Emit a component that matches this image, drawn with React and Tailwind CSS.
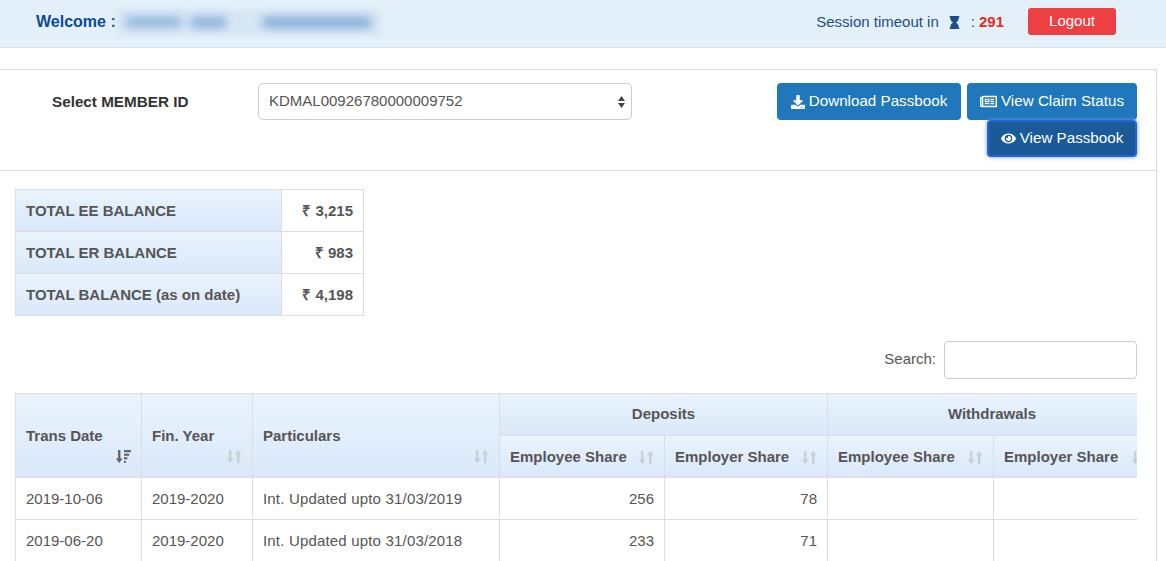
import React from "react";
import { FaDownload, FaRegNewspaper, FaEye, FaHourglass } from "react-icons/fa";

const Sort = ({ active }) => (
  <svg width="16" height="16" viewBox="0 0 16 16" className={`shrink-0 ${active ? "text-[#666]" : "text-[#c9ced4]"}`} fill="currentColor">
    <path d="M3 2h2.4v8.5H7.6L4.2 15 .8 10.5H3z" />
    {active ? (
      <g>
        <rect x="9" y="2" width="7" height="2.2" />
        <rect x="9" y="5.6" width="5.2" height="2.2" />
        <rect x="9" y="9.2" width="3.4" height="2.2" />
        <rect x="9" y="12.8" width="1.8" height="2.2" />
      </g>
    ) : (
      <path d="M11 15h2.4V6.5h2.2L12.2 2 8.8 6.5H11z" />
    )}
  </svg>
);

const TH = "border-r border-b border-[#ddd] bg-gradient-to-b from-[#eaf3fd] to-[#d9e8fa] text-[#555] font-bold align-middle whitespace-nowrap";

const SortHead = ({ label }) => (
  <th className={`${TH} text-left h-[42px] px-[10px]`}>
    <div className="flex items-center justify-between">
      <span className="pt-[1px]">{label}</span>
      <Sort />
    </div>
  </th>
);

const TallHead = ({ label, active }) => (
  <th rowSpan={2} className={`${TH} text-left !align-top px-[10px] pt-[28px] pb-0`}>
    <div className="leading-[28px] h-[28px]">{label}</div>
    <div className="flex justify-end -mt-[2px]"><Sort active={active} /></div>
  </th>
);

const Balance = ({ label, value, last }) => (
  <div className={`flex ${last ? "h-[41px]" : "h-[42px] border-b border-[#ddd]"}`}>
    <div className="w-[266px] flex items-center px-[10px] pt-[1px] font-bold text-[#555] bg-gradient-to-b from-[#eaf3fd] to-[#d9e8fa] border-r border-[#ddd]">{label}</div>
    <div className="flex-1 flex items-center justify-end px-[10px] pt-[1px] font-bold text-[#555]">{value}</div>
  </div>
);

const Row = ({ date, part, a, b }) => (
  <tr className="h-[42px] text-[#555]">
    <td className="border-r border-b border-[#ddd] px-[10px] pt-[2px]">{date}</td>
    <td className="border-r border-b border-[#ddd] px-[10px] pt-[2px]">2019-2020</td>
    <td className="border-r border-b border-[#ddd] px-[10px] pt-[2px] tracking-[0.18px]">{part}</td>
    <td className="border-r border-b border-[#ddd] px-[10px] pt-[2px] text-right">{a}</td>
    <td className="border-r border-b border-[#ddd] px-[10px] pt-[2px] text-right">{b}</td>
    <td className="border-r border-b border-[#ddd] px-[10px]"></td>
    <td className="border-r border-b border-[#ddd] px-[10px]"></td>
  </tr>
);

const Btn = ({ icon, children, className = "" }) => (
  <button className={`h-[37px] rounded-[4px] bg-[#2077bb] text-white text-[15.2px] flex items-center justify-center gap-[4px] ${className}`}>
    {icon}
    <span>{children}</span>
  </button>
);

export default function App() {
  return (
    <div className="w-[1166px] h-[561px] overflow-hidden bg-white text-[15px] font-['Liberation_Sans',Arial,sans-serif]">
      <header className="h-[48px] bg-[#e3f0fa] border-b border-[#d5e4f0] flex items-center pl-[36px] pr-[50px] pb-[3px]">
        <span className="text-[#0a4a94] font-bold text-[16px]">Welcome :</span>
        <div className="ml-[1px] flex items-center bg-[#d6e6f4] h-[26px] w-[264px] pl-[9px] blur-[3px]">
          <div className="w-[55px] h-[10px] bg-[#8fb5dc] blur-[3px]" />
          <div className="ml-[10px] w-[35px] h-[11px] bg-[#8cb2da] blur-[3px]" />
          <div className="ml-[37px] w-[108px] h-[11px] bg-[#85add8] blur-[3px]" />
        </div>
        <div className="ml-auto flex items-center text-[#1c4f86] text-[15px]">
          <span>Session timeout in</span>
          <FaHourglass className="ml-[9px] text-[#1d4f8d] text-[13px]" />
          <span className="ml-[10px]">:</span>
          <span className="ml-[4px] text-[#e8281a] font-bold">291</span>
          <button className="ml-[24px] w-[88px] h-[27px] rounded-[3px] bg-[#ec4042] text-white text-[15px] -mt-[2px]">Logout</button>
        </div>
      </header>

      <main className="mt-[21px] w-[1157px] border-t border-r border-[#ddd] h-[500px]">
        <section className="h-[101px] border-b border-[#ddd] flex pt-[13px] pr-[19px]">
          <label className="ml-[52px] w-[206px] h-[37px] pt-[2px] flex items-center font-bold text-[#333] text-[15.25px]">Select MEMBER ID</label>
          <div className="w-[374px] h-[37px] rounded-[5px] border border-[#ccc] flex items-center justify-between pl-[10px] pr-[5px] text-[#555] text-[15px]">
            <span>KDMAL00926780000009752</span>
            <svg width="9" height="14" viewBox="0 0 9 14" fill="#444"><path d="M4.5 1 8 6H1zM4.5 13 1 8h7z" /></svg>
          </div>
          <div className="ml-auto w-[362px] flex flex-wrap justify-end gap-x-[6px] content-start">
            <Btn className="w-[184px]" icon={<FaDownload className="text-[14px]" />}>Download Passbook</Btn>
            <Btn className="w-[170px]" icon={<FaRegNewspaper className="text-[17px]" />}>View Claim Status</Btn>
            <Btn className="w-[150px] !bg-[#1a5a98] border-2 border-[#2a62d8] shadow-[0_0_4px_#5c9cf0] rounded-[3px]" icon={<FaEye className="text-[15px]" />}>View Passbook</Btn>
          </div>
        </section>

        <section className="px-[15px] pr-[19px]">
          <div className="mt-[18px] w-[349px] border border-[#ddd]">
            <Balance label="TOTAL EE BALANCE" value="₹ 3,215" />
            <Balance label="TOTAL ER BALANCE" value="₹ 983" />
            <Balance label="TOTAL BALANCE (as on date)" value="₹ 4,198" last />
          </div>

          <div className="mt-[25px] flex items-center justify-end gap-[8px] text-[#555]">
            <span className="-mt-[2px]">Search:</span>
            <div className="w-[193px] h-[38px] rounded-[4px] border border-[#ccc]" />
          </div>

          <div className="mt-[14px] w-[1122px] overflow-hidden">
            <table className="table-fixed border-separate border-spacing-0 w-[1142px] border-l border-t border-[#ddd]">
              <colgroup>
                <col className="w-[126px]" />
                <col className="w-[111px]" />
                <col className="w-[247px]" />
                <col className="w-[165px]" />
                <col className="w-[163px]" />
                <col className="w-[166px]" />
                <col className="w-[163px]" />
              </colgroup>
              <thead>
                <tr className="h-[42px]">
                  <TallHead label="Trans Date" active />
                  <TallHead label="Fin. Year" />
                  <TallHead label="Particulars" />
                  <th colSpan={2} className={`${TH} text-center`}>Deposits</th>
                  <th colSpan={2} className={`${TH} text-center`}>Withdrawals</th>
                </tr>
                <tr>
                  <SortHead label="Employee Share" />
                  <SortHead label="Employer Share" />
                  <SortHead label="Employee Share" />
                  <th className={`${TH} text-left h-[42px] px-[10px]`}>
                    <div className="flex items-center gap-[13px]">
                      <span className="pt-[1px]">Employer Share</span>
                      <Sort />
                    </div>
                  </th>
                </tr>
              </thead>
              <tbody>
                <Row date="2019-10-06" part="Int. Updated upto 31/03/2019" a="256" b="78" />
                <Row date="2019-06-20" part="Int. Updated upto 31/03/2018" a="233" b="71" />
              </tbody>
            </table>
          </div>
        </section>
      </main>
    </div>
  );
}
